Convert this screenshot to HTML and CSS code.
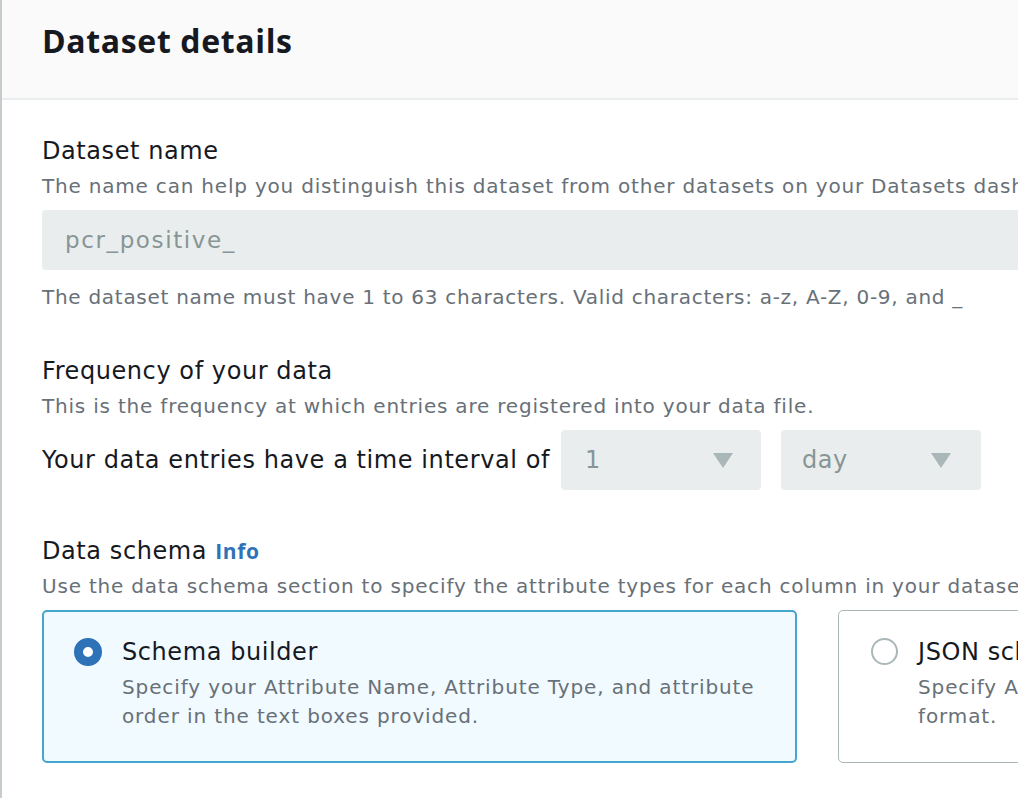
FILE: index.html
```html
<!DOCTYPE html>
<html lang="en">
<head>
<meta charset="utf-8">
<title>Dataset details</title>
<link rel="stylesheet" href="styles.css">
</head>
<body>
<div class="panel">
  <div class="panel-header">
    <h2 class="panel-title">Dataset details</h2>
  </div>
  <div class="panel-body">
    <div class="field">
      <div class="label">Dataset name</div>
      <div class="desc">The name can help you distinguish this dataset from other datasets on your Datasets dashboard.</div>
      <div class="input">pcr_positive_</div>
      <div class="constraint">The dataset name must have 1 to 63 characters. Valid characters: a-z, A-Z, 0-9, and _</div>
    </div>
    <div class="field">
      <div class="label">Frequency of your data</div>
      <div class="desc">This is the frequency at which entries are registered into your data file.</div>
      <div class="interval-row">
        <span class="interval-text">Your data entries have a time interval of</span>
        <div class="select select-num"><span>1</span><span class="caret"></span></div>
        <div class="select select-unit"><span>day</span><span class="caret"></span></div>
      </div>
    </div>
    <div class="field field-schema">
      <div class="label">Data schema <a class="info">Info</a></div>
      <div class="desc">Use the data schema section to specify the attribute types for each column in your dataset.</div>
      <div class="tiles">
        <div class="tile tile-selected">
          <span class="radio radio-on"></span>
          <div class="tile-text">
            <div class="tile-title">Schema builder</div>
            <div class="tile-desc">Specify your Attribute Name, Attribute Type, and attribute order in the text boxes provided.</div>
          </div>
        </div>
        <div class="tile">
          <span class="radio radio-off"></span>
          <div class="tile-text">
            <div class="tile-title">JSON schema</div>
            <div class="tile-desc tile-desc-nowrap">Specify Attribute Name, Attribute Type, and attribute order in JSON<br>format.</div>
          </div>
        </div>
      </div>
    </div>
  </div>
</div>
</body>
</html>
```
FILE: styles.css
```css
html, body {
  margin: 0;
  padding: 0;
  background: #ffffff;
  overflow: hidden;
}
body {
  font-family: "DejaVu Sans", "Open Sans", sans-serif;
  color: #16191f;
  width: 1018px;
  height: 798px;
  letter-spacing: 0.036em;
}
.panel {
  border-left: 2px solid #c6cccd;
  width: 1400px;
  min-height: 798px;
  box-sizing: border-box;
}
.panel-header {
  background: #fafafa;
  border-bottom: 2px solid #eaeded;
  height: 98px;
  padding: 0 40px;
  display: flex;
  align-items: center;
}
.panel-title {
  margin: 0;
  font-family: "Open Sans", "Noto Sans", sans-serif;
  font-size: 32px;
  font-weight: 700;
  line-height: 40px;
  letter-spacing: 0.02em;
  color: #16191f;
  position: relative;
  top: -8px;
}
.panel-body {
  padding: 35px 40px 0 40px;
  display: flex;
  flex-direction: column;
  gap: 44px;
}
.field {
  display: flex;
  flex-direction: column;
}
.field-schema {
  margin-top: 1px;
}
.label {
  font-size: 24px;
  line-height: 32px;
  color: #16191f;
  white-space: nowrap;
}
.info {
  font-family: "Open Sans", "Noto Sans", sans-serif;
  color: #2e72b8;
  font-weight: 700;
  font-size: 21px;
  letter-spacing: 0.03em;
}
.desc {
  margin-top: 5px;
  font-size: 20px;
  line-height: 28px;
  letter-spacing: 0.04em;
  color: #687078;
  white-space: nowrap;
}
.input {
  margin-top: 10px;
  height: 60px;
  background: #eaeded;
  border-radius: 4px;
  box-sizing: border-box;
  padding: 0 23px;
  display: flex;
  align-items: center;
  font-size: 23px;
  letter-spacing: 0.07em;
  color: #879596;
}
.constraint {
  margin-top: 13px;
  font-size: 20px;
  line-height: 28px;
  letter-spacing: 0.036em;
  color: #687078;
  white-space: nowrap;
}
.interval-row {
  margin-top: 10px;
  display: flex;
  align-items: center;
}
.interval-text {
  font-size: 24px;
  line-height: 32px;
  color: #16191f;
  margin-right: 11px;
  white-space: nowrap;
}
.select {
  width: 200px;
  height: 60px;
  flex: none;
  background: #eaeded;
  border-radius: 4px;
  box-sizing: border-box;
  display: flex;
  align-items: center;
  justify-content: space-between;
  font-size: 24px;
  color: #879596;
}
.select-num {
  padding: 0 28px 0 24px;
}
.select-unit {
  margin-left: 20px;
  padding: 0 30px 0 21px;
}
.caret {
  width: 0;
  height: 0;
  border-left: 10px solid transparent;
  border-right: 10px solid transparent;
  border-top: 15px solid #aab7b8;
}
.tiles {
  margin-top: 10px;
  display: flex;
  gap: 41px;
}
.tile {
  width: 755px;
  flex: none;
  height: 153px;
  box-sizing: border-box;
  border: 1px solid #aab7b8;
  border-radius: 5px;
  padding: 25px 31px 0 32px;
  display: flex;
  gap: 20px;
  background: #ffffff;
}
.tile-selected {
  border: 2px solid #44a6cc;
  background: #f1faff;
  padding: 24px 30px 0 30px;
}
.radio {
  width: 28px;
  height: 28px;
  box-sizing: border-box;
  border-radius: 50%;
  flex: none;
  margin-top: 2px;
}
.radio-on {
  border: 9px solid #2e72b8;
  background: #ffffff;
}
.radio-off {
  border: 2px solid #aab7b8;
  background: #ffffff;
  width: 27px;
  height: 27px;
}
.tile-text {
  display: flex;
  flex-direction: column;
}
.tile-title {
  font-size: 24px;
  line-height: 32px;
  color: #16191f;
  white-space: nowrap;
}
.tile-desc {
  margin-top: 5px;
  font-size: 20px;
  line-height: 29px;
  letter-spacing: 0.044em;
  color: #687078;
}
.tile-desc-nowrap {
  white-space: nowrap;
}
```
